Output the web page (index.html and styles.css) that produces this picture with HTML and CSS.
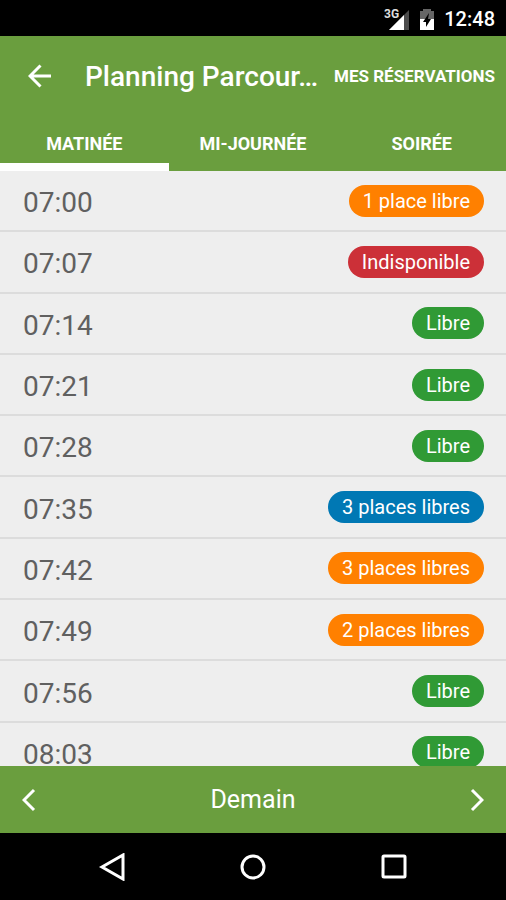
FILE: index.html
```html
<!DOCTYPE html>
<html lang="fr">
<head>
<meta charset="utf-8">
<meta name="viewport" content="width=device-width, initial-scale=1">
<title>Planning</title>
<link rel="stylesheet" href="styles.css">
</head>
<body>
<div class="status">
  <svg width="26" height="22" viewBox="0 0 26 22" aria-hidden="true">
    <path d="M25 2v20H5z" fill="#4c4c4c"/>
    <path d="M20 7v15H5z" fill="#fff"/>
    <text class="network" x="0" y="10">3G</text>
  </svg>
  <svg width="16" height="22" viewBox="0 0 16 22" aria-hidden="true">
    <path d="M4 1h8v2h3v9H1V3h3z" fill="#666"/>
    <path d="M1 11h14v11H1z" fill="#fff"/>
    <path d="M10 5 4 14h3v5l5-8H9z" fill="#000"/>
  </svg>
  <time>12:48</time>
</div>
<header class="header">
  <div class="toolbar">
    <button class="icon-button" type="button" aria-label="Retour">
      <svg width="24" height="24" viewBox="0 0 24 24"><path d="M12.500 1.500 2 12l10.500 10.500M2 12h21"/></svg>
    </button>
    <h1 class="title">Planning Parcour…</h1>
    <a class="action" href="#reservations">MES RÉSERVATIONS</a>
  </div>
  <nav class="tabs">
    <button class="tab tab-active" type="button">MATINÉE</button>
    <button class="tab" type="button">MI-JOURNÉE</button>
    <button class="tab" type="button">SOIRÉE</button>
  </nav>
</header>
<main class="content">
  <ul class="slots">
    <li class="slot"><time>07:00</time><span class="badge partial">1 place libre</span></li>
    <li class="slot"><time>07:07</time><span class="badge full">Indisponible</span></li>
    <li class="slot"><time>07:14</time><span class="badge free">Libre</span></li>
    <li class="slot"><time>07:21</time><span class="badge free">Libre</span></li>
    <li class="slot"><time>07:28</time><span class="badge free">Libre</span></li>
    <li class="slot"><time>07:35</time><span class="badge booked">3 places libres</span></li>
    <li class="slot"><time>07:42</time><span class="badge partial">3 places libres</span></li>
    <li class="slot"><time>07:49</time><span class="badge partial">2 places libres</span></li>
    <li class="slot"><time>07:56</time><span class="badge free">Libre</span></li>
    <li class="slot"><time>08:03</time><span class="badge free">Libre</span></li>
  </ul>
</main>
<footer class="day-bar">
  <button class="icon-button" type="button" aria-label="Jour précédent">
    <svg width="14" height="24" viewBox="0 0 14 24"><path d="M12 2 2 12l10 10"/></svg>
  </button>
  <span class="day">Demain</span>
  <button class="icon-button" type="button" aria-label="Jour suivant">
    <svg width="14" height="24" viewBox="0 0 14 24"><path d="m2 2 10 10L2 22"/></svg>
  </button>
</footer>
<nav class="system">
  <button class="icon-button" type="button" aria-label="Précédent">
    <svg width="28" height="28" viewBox="0 0 28 28"><path d="M25 2v24L4 14z"/></svg>
  </button>
  <button class="icon-button" type="button" aria-label="Accueil">
    <svg width="28" height="28" viewBox="0 0 28 28"><circle cx="14" cy="14" r="11"/></svg>
  </button>
  <button class="icon-button" type="button" aria-label="Applications récentes">
    <svg width="28" height="28" viewBox="0 0 28 28"><rect x="3" y="3" width="22" height="21" rx="1"/></svg>
  </button>
</nav>
</body>
</html>
```
FILE: styles.css
```css
* {
  box-sizing: border-box;
}

body {
  margin: 0;
  height: 100vh;
  display: flex;
  flex-direction: column;
  background: #eee;
  font-family: Roboto, "Liberation Sans", sans-serif;
  color: #fff;
}

button {
  padding: 0;
  border: 0;
  background: none;
  color: inherit;
  font: inherit;
}

svg {
  display: block;
}

.status {
  flex: none;
  display: flex;
  justify-content: flex-end;
  align-items: center;
  gap: 9px;
  height: 36px;
  padding: 2px 11px 0;
  background: #000;
  font-size: 20px;
  font-weight: 500;
}

.network {
  fill: #ddd;
  stroke: #000;
  stroke-width: 2px;
  paint-order: stroke;
  font-size: 12px;
  font-weight: 700;
}

.header {
  flex: none;
  background: #6a9e3e;
}

.toolbar {
  display: flex;
  align-items: center;
  height: 80px;
  padding: 0 11px 0 28px;
}

.icon-button {
  display: grid;
  place-items: center;
}

.icon-button svg {
  fill: none;
  stroke: #fff;
  stroke-width: 3px;
}

.title {
  flex: 1;
  min-width: 0;
  margin: 0 12px 0 33px;
  overflow: hidden;
  text-overflow: ellipsis;
  white-space: nowrap;
  font-size: 28px;
  font-weight: 500;
}

.action {
  color: inherit;
  font-size: 17px;
  font-weight: 700;
  text-decoration: none;
}

.tabs {
  display: grid;
  grid-template-columns: repeat(3, 1fr);
}

.tab {
  height: 55px;
  padding-top: 8px;
  border-bottom: 8px solid transparent;
  font-size: 18px;
  font-weight: 700;
}

.tab-active {
  border-bottom-color: #fff;
}

.content {
  flex: 1;
  min-height: 0;
  overflow: hidden;
}

.slots {
  display: grid;
  grid-auto-rows: 1fr;
  height: 613px;
  margin: 0;
  padding: 0;
  list-style: none;
}

.slot {
  display: flex;
  justify-content: space-between;
  align-items: center;
  padding: 0 22px 0 23px;
  border-bottom: 2px solid #dcdcdc;
  color: #606060;
  font-size: 28px;
}

.slot time {
  padding-top: 4px;
}

.badge {
  padding: 0 14px;
  border-radius: 16px;
  color: #fff;
  font-size: 20px;
  line-height: 32px;
}

.free {
  background: #309a35;
}

.partial {
  background: #ff8000;
}

.full {
  background: #cc3038;
}

.booked {
  background: #0078b4;
}

.day-bar {
  flex: none;
  display: flex;
  justify-content: space-between;
  align-items: center;
  height: 67px;
  padding: 0 22px;
  background: #6a9e3e;
  font-size: 25px;
}

.system {
  flex: none;
  display: flex;
  justify-content: space-between;
  height: 67px;
  padding: 0 98px;
  background: #000;
}
```
